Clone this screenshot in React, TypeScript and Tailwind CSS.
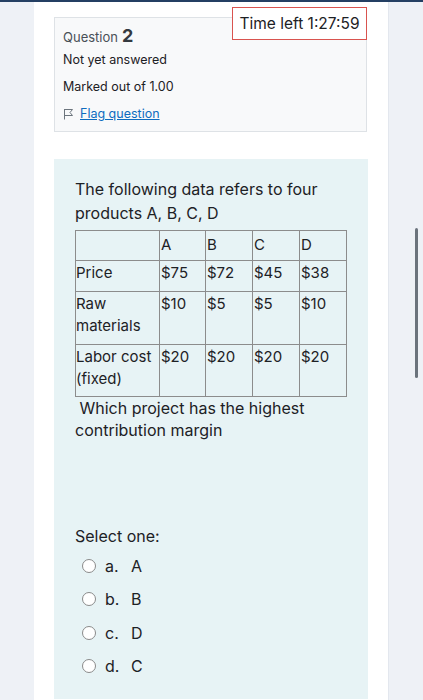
import React from "react";

type Row = { label: string; values: string[]; h: string };

const rows: Row[] = [
  { label: "Price", values: ["$75", "$72", "$45", "$38"], h: "h-[31px]" },
  { label: "Raw materials", values: ["$10", "$5", "$5", "$10"], h: "h-[53px]" },
  { label: "Labor cost (fixed)", values: ["$20", "$20", "$20", "$20"], h: "h-[52px]" },
];

const options = [
  { key: "a.", text: "A" },
  { key: "b.", text: "B" },
  { key: "c.", text: "D" },
  { key: "d.", text: "C" },
];

function FlagIcon() {
  return (
    <svg width="11" height="12" viewBox="0 0 11 12" fill="none">
      <path d="M1.5 11.5V1" stroke="#6c757d" strokeWidth="1" />
      <path d="M1.5 1.5H9.5L7 4.5L9.5 7.5H1.5" stroke="#6c757d" strokeWidth="1" strokeLinejoin="round" />
    </svg>
  );
}

export default function App() {
  return (
    <div
      className="relative w-full h-[700px] overflow-hidden bg-[#eef1f6] text-[#1d2125]"
      style={{ fontFamily: "Inter, 'Open Sans', sans-serif" }}
    >
      <div className="h-[2px] bg-[#243f63]" />
      <div className="flex">
        <div className="w-[34px] shrink-0" />
        <div className="relative w-[354px] h-[698px] bg-white px-[20px] pt-[15px]">
          {/* Timer */}
          <div className="absolute right-[21px] top-[5px] w-[135px] h-[33px] bg-white border border-[#d9534f] flex items-center justify-center text-[15.5px] text-[#1d2125]">
            Time left 1:27:59
          </div>

          {/* Question info */}
          <div className="w-[313px] h-[115px] bg-[#f8f9fa] border border-[#dee2e6] px-[8px] pt-[4px]">
            <div className="flex items-baseline gap-[4px] h-[24px]">
              <span className="text-[13px] text-[#495057]">Question</span>
              <span className="text-[18px] font-bold text-[#343a40]">2</span>
            </div>
            <div className="text-[12.5px] leading-[26px] mt-[1px]">Not yet answered</div>
            <div className="text-[12.5px] leading-[27px]">Marked out of 1.00</div>
            <div className="flex items-center gap-[6px] text-[12.5px] leading-[27px]">
              <FlagIcon />
              <span className="text-[#0f6cbf] underline">Flag question</span>
            </div>
          </div>

          {/* Question content */}
          <div className="mt-[27px] w-[314px] h-[540px] bg-[#e7f3f5] pl-[21px] pt-[18px] text-[16px]">
            <p className="leading-[24px] w-[270px]">
              The following data refers to four products A, B, C, D
            </p>
            <table className="mt-[5px] table-fixed border-collapse w-[271px] text-[15px] leading-[22px]">
              <colgroup>
                <col className="w-[84px]" />
                <col className="w-[46px]" />
                <col className="w-[47px]" />
                <col className="w-[47px]" />
                <col className="w-[47px]" />
              </colgroup>
              <tbody>
                <tr className="h-[30px]">
                  <td className="border border-[#8c8c8c] align-top p-0" />
                  {["A", "B", "C", "D"].map((c) => (
                    <td key={c} className="border border-[#8c8c8c] align-top p-0 pl-[1px] pt-[3px]">
                      {c}
                    </td>
                  ))}
                </tr>
                {rows.map((r) => (
                  <tr key={r.label} className={r.h}>
                    <td className="border border-[#8c8c8c] align-top p-0 pt-[1px]">{r.label}</td>
                    {r.values.map((v, i) => (
                      <td key={i} className="border border-[#8c8c8c] align-top p-0 pl-[1px] pt-[1px]">
                        {v}
                      </td>
                    ))}
                  </tr>
                ))}
              </tbody>
            </table>
            <p className="leading-[22px] w-[270px]">
              {"\u00a0"}Which project has the highest contribution margin
            </p>

            <p className="mt-[84px] leading-[22px]">Select one:</p>
            <div className="mt-[2px] flex flex-col">
              {options.map((o) => (
                <div key={o.key} className="flex items-center h-[33.5px] pl-[7px]">
                  <span className="w-[14px] h-[14px] rounded-full border-[1.5px] border-[#8a8a8a] bg-white shrink-0" />
                  <span className="ml-[9px] w-[26px]">{o.key}</span>
                  <span>{o.text}</span>
                </div>
              ))}
            </div>
          </div>
        </div>
        <div className="flex-1 border-l border-[#e3e7ee]" />
      </div>

      {/* Scrollbar */}
      <div className="absolute left-[415px] top-[228px] w-[3px] h-[150px] rounded-full bg-[#6b737c]" />
    </div>
  );
}
